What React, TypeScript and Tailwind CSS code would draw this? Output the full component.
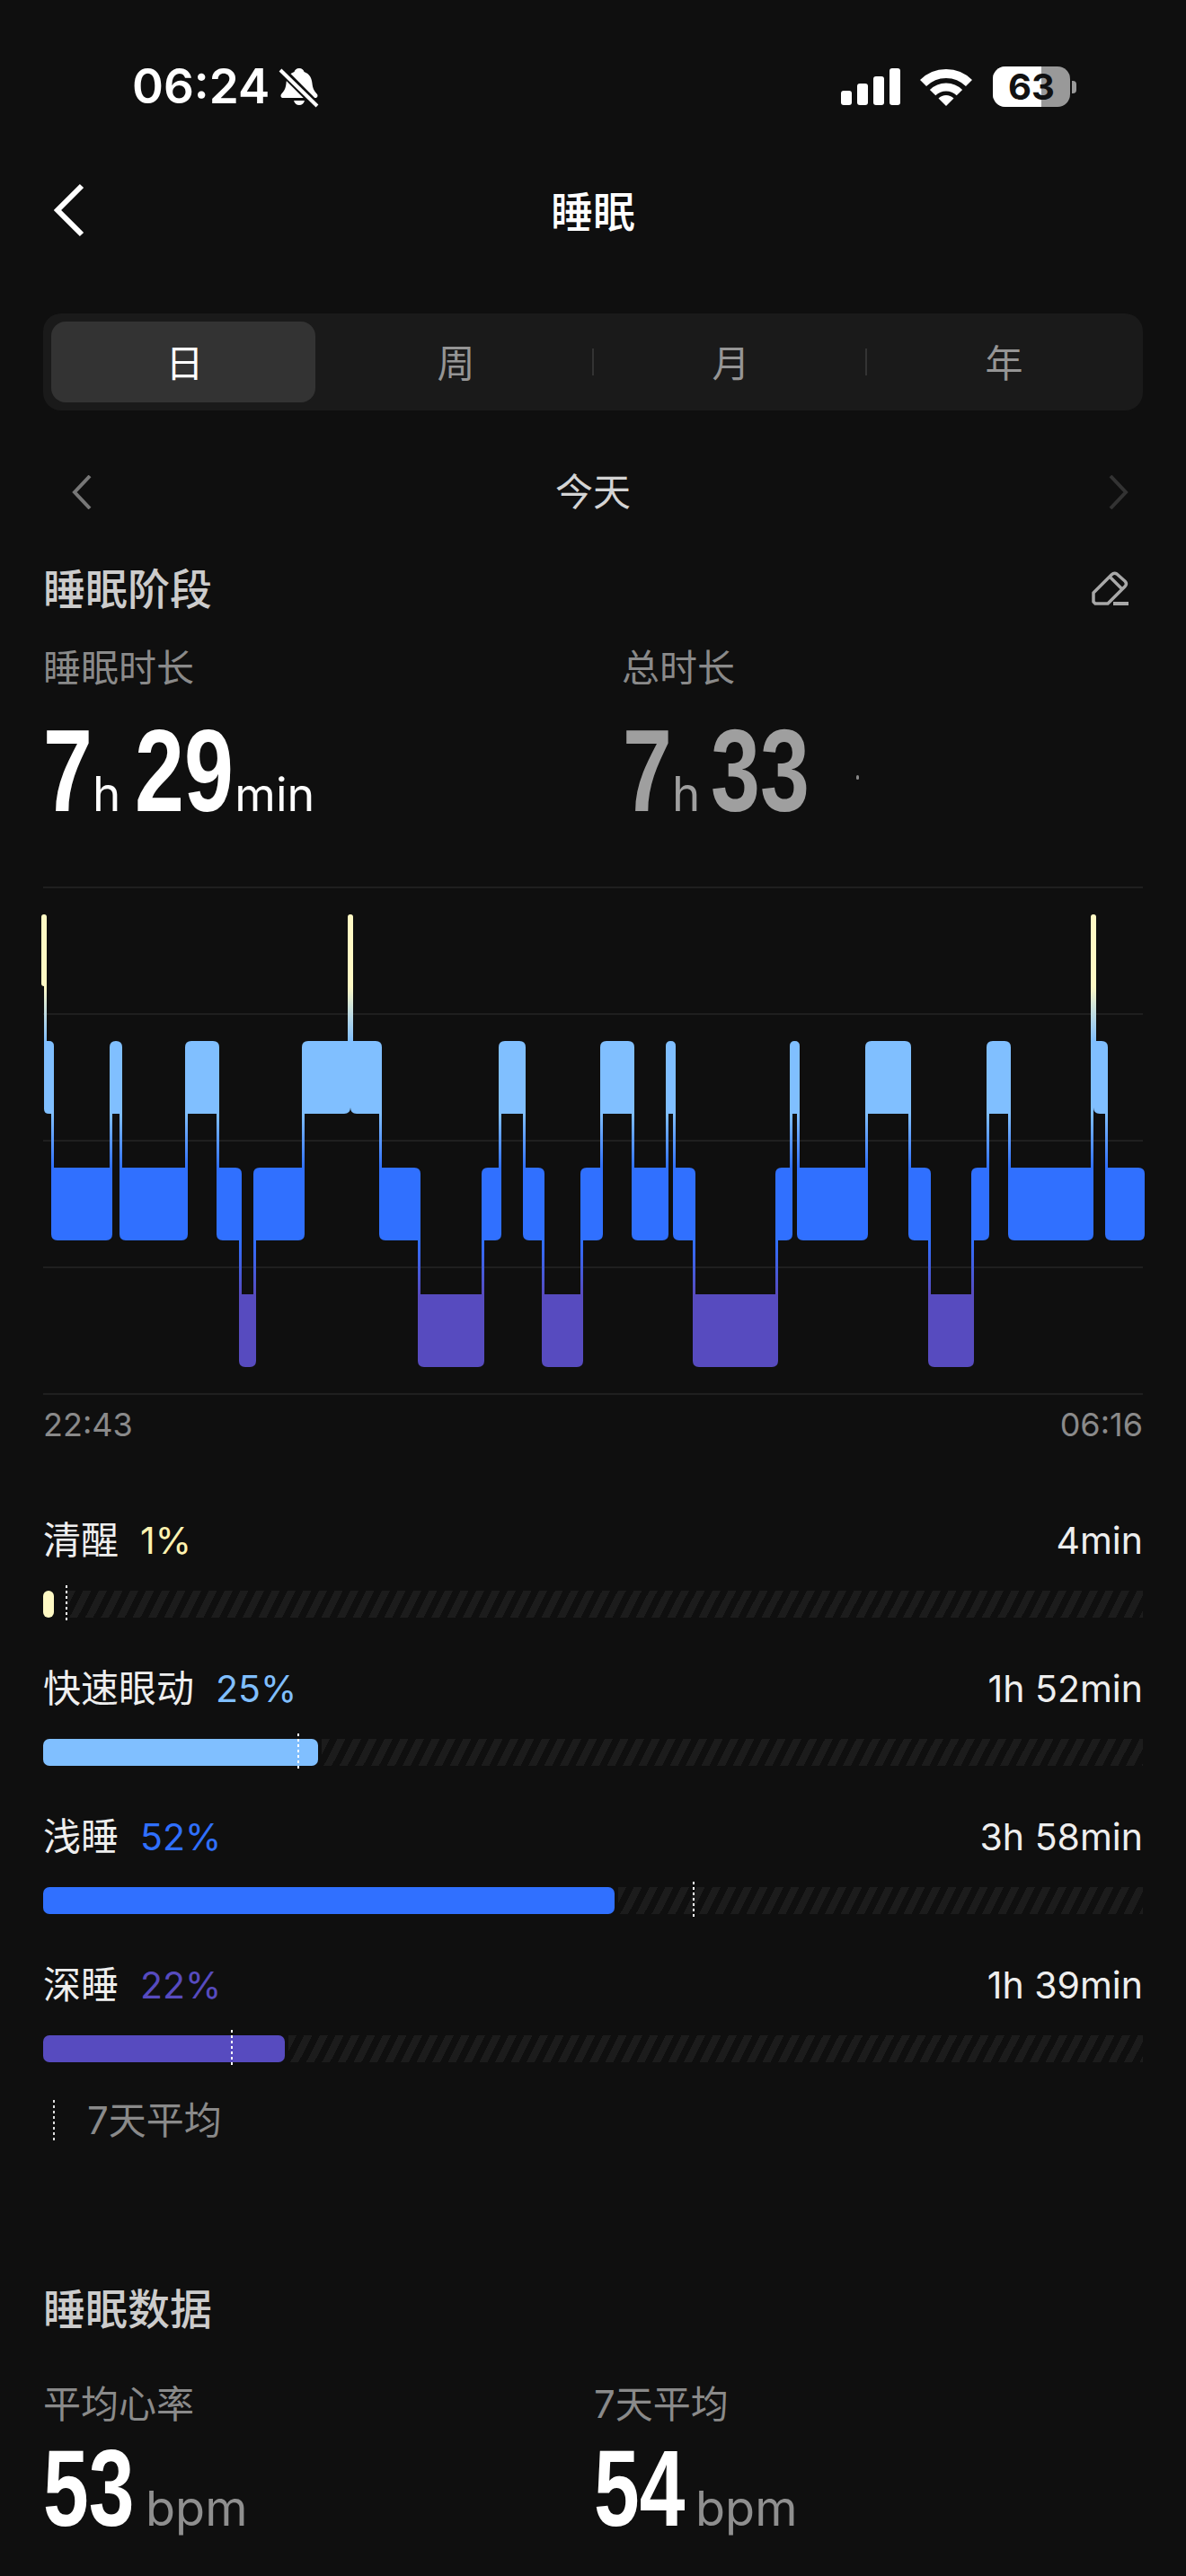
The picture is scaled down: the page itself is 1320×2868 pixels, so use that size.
type Level = "awake" | "rem" | "light" | "deep";
type Segment = [number, number, Level];

const levels: Record<Level, { top: number; bottom: number; rank: number }> = {
  awake: { top: 1018, bottom: 1098, rank: 0 },
  rem: { top: 1159, bottom: 1240, rank: 1 },
  light: { top: 1300, bottom: 1381, rank: 2 },
  deep: { top: 1441, bottom: 1522, rank: 3 },
};

const segments: Segment[] = [
  [46, 52, "awake"],
  [49, 60, "rem"],
  [57, 125, "light"],
  [122, 136, "rem"],
  [133, 209, "light"],
  [206, 244, "rem"],
  [241, 269, "light"],
  [266, 285, "deep"],
  [282, 339, "light"],
  [336, 390, "rem"],
  [387, 393, "awake"],
  [390, 425, "rem"],
  [422, 468, "light"],
  [465, 539, "deep"],
  [536, 558, "light"],
  [555, 585, "rem"],
  [582, 606, "light"],
  [603, 649, "deep"],
  [646, 671, "light"],
  [668, 706, "rem"],
  [703, 744, "light"],
  [741, 752, "rem"],
  [749, 774, "light"],
  [771, 866, "deep"],
  [863, 882, "light"],
  [879, 890, "rem"],
  [887, 966, "light"],
  [963, 1014, "rem"],
  [1011, 1036, "light"],
  [1033, 1084, "deep"],
  [1081, 1101, "light"],
  [1098, 1125, "rem"],
  [1122, 1217, "light"],
  [1214, 1220, "awake"],
  [1217, 1233, "rem"],
  [1230, 1274, "light"],
];

const gradientStops: [number, string][] = [
  [1098, "#fff9c4"],
  [1159, "#80bfff"],
  [1240, "#80bfff"],
  [1300, "#3070ff"],
  [1381, "#3070ff"],
  [1441, "#574bbf"],
];

function blockPath(index: number) {
  const [x1, x2, level] = segments[index];
  const { top, bottom, rank } = levels[level];
  const prev = index > 0 ? levels[segments[index - 1][2]].rank : null;
  const next = index < segments.length - 1 ? levels[segments[index + 1][2]].rank : null;
  const r = Math.min(7, (x2 - x1) / 2);
  const tl = prev !== null && prev < rank ? 0 : r;
  const bl = prev !== null && prev > rank ? 0 : r;
  const tr = next !== null && next < rank ? 0 : r;
  const br = next !== null && next > rank ? 0 : r;
  return [
    `M${x1 + tl} ${top}`,
    `L${x2 - tr} ${top}`,
    `Q${x2} ${top} ${x2} ${top + tr}`,
    `L${x2} ${bottom - br}`,
    `Q${x2} ${bottom} ${x2 - br} ${bottom}`,
    `L${x1 + bl} ${bottom}`,
    `Q${x1} ${bottom} ${x1} ${bottom - bl}`,
    `L${x1} ${top + tl}`,
    `Q${x1} ${top} ${x1 + tl} ${top}`,
    "Z",
  ].join(" ");
}

function SleepChart() {
  return (
    <svg viewBox="40 985 1240 570" className="block ml-10 mt-[62px] w-[1240px] h-[570px]">
      <defs>
        <linearGradient id="stage" gradientUnits="userSpaceOnUse" x1="0" y1="1018" x2="0" y2="1522">
          {gradientStops.map(([y, color]) => (
            <stop key={y} offset={(y - 1018) / 504} stopColor={color} />
          ))}
        </linearGradient>
      </defs>
      {[988, 1129, 1270, 1411, 1552].map((y) => (
        <rect key={y} x="48" y={y - 1} width="1224" height="2" fill="#1f1f1f" />
      ))}
      {segments.slice(0, -1).map((seg, i) => {
        const after = segments[i + 1];
        const a = levels[seg[2]];
        const b = levels[after[2]];
        const yTop = a.rank < b.rank ? a.bottom : b.bottom;
        const yBottom = a.rank < b.rank ? b.top : a.top;
        return (
          <rect
            key={i}
            x={after[0]}
            y={yTop - 1}
            width={seg[1] - after[0]}
            height={yBottom - yTop + 2}
            fill="url(#stage)"
          />
        );
      })}
      {segments.map((_, i) => (
        <path key={i} d={blockPath(i)} fill="url(#stage)" />
      ))}
    </svg>
  );
}

function StatusBar() {
  return (
    <div className="flex items-center justify-between h-[45px] mt-[74px] pl-[147px] pr-[122px]">
      <div className="flex items-center gap-[10px]">
        <span className="text-[53px] leading-none font-semibold text-white">06:24</span>
        <svg width="46" height="46" viewBox="0 0 46 46">
          <path
            d="M23 2c3 0 5 2 5.500 4 6 2 8.500 7 9 13 .5 6 3 9 5.500 12 1 1.500 .5 4-2 4H5c-2.500 0-3-2.500-2-4 2.500-3 5-6 5.500-12 .5-6 3-11 9-13C18 4 20 2 23 2z"
            fill="#fff"
          />
          <path d="M17 38h12c-1 3.500-3 5-6 5s-5-1.500-6-5z" fill="#fff" />
          <path d="M3 4l40 40" stroke="#0f0f0f" strokeWidth="9" />
          <path d="M2 4l41 40" stroke="#fff" strokeWidth="4" />
        </svg>
      </div>
      <div className="flex items-center">
        <div className="flex items-end gap-[6px] h-[41px]">
          <div className="w-3 h-4 rounded-[3px] bg-white" />
          <div className="w-3 h-6 rounded-[3px] bg-white" />
          <div className="w-3 h-8 rounded-[3px] bg-white" />
          <div className="w-3 h-[41px] rounded-[3px] bg-white" />
        </div>
        <svg width="58" height="42" viewBox="0 0 58 42" className="ml-[22px]">
          <path d="M3.500 16.500A36 36 0 0 1 54.500 16.500" fill="none" stroke="#fff" strokeWidth="10" />
          <path d="M14.100 27.100A21 21 0 0 1 43.900 27.100" fill="none" stroke="#fff" strokeWidth="9" />
          <path d="M29 42L20.500 33.500A12 12 0 0 1 37.500 33.500Z" fill="#fff" />
        </svg>
        <div className="relative ml-[23px] w-[86px] h-[45px] rounded-[14px] bg-[#999999]">
          <div className="w-[54px] h-full rounded-l-[14px] bg-white" />
          <span className="absolute inset-0 flex items-center justify-center text-[40px] font-bold leading-none text-[#111111]">
            63
          </span>
        </div>
        <div className="ml-[2px] w-[5px] h-[14px] rounded-r-[4px] bg-[#999999]" />
      </div>
    </div>
  );
}

function Chevron({ dir, color }: { dir: "left" | "right"; color: string }) {
  return (
    <svg width="22" height="38" viewBox="0 0 22 38" fill="none">
      <path d={dir === "left" ? "M20 1L3 19l17 18" : "M2 1l17 18L2 37"} stroke={color} strokeWidth="4" />
    </svg>
  );
}

function NavBar() {
  return (
    <div className="relative flex items-center justify-center h-[54px] mt-[88px] pt-[3px]">
      <svg width="36" height="60" viewBox="0 0 36 60" fill="none" className="absolute left-[58px] top-[-3px]">
        <path d="M33 3L6 30l27 27" stroke="#fff" strokeWidth="6" />
      </svg>
      <span className="text-[47px] leading-none font-medium text-white">睡眠</span>
    </div>
  );
}

function Tabs() {
  const tabs = ["日", "周", "月", "年"];
  return (
    <div className="mx-12 mt-[88px] h-[108px] rounded-[20px] bg-[#1a1a1a] p-[9px] grid grid-cols-[294px_308px_304px_304px]">
      {tabs.map((tab, i) => (
        <div
          key={tab}
          className={
            i === 0
              ? "flex items-center justify-center pt-[2px] pl-[3px] rounded-[16px] bg-[#333333] text-[42px] text-white"
              : "relative flex items-center justify-center pt-[2px] pl-[5px] text-[42px] text-[#959595]"
          }
        >
          {i > 1 && <div className="absolute left-0 top-[30px] w-[2px] h-[30px] bg-[#333333]" />}
          {tab}
        </div>
      ))}
    </div>
  );
}

const stages = [
  { name: "清醒", pct: "1%", color: "text-[#fff3b0]", bar: "bg-[#fff9c4]", value: "4min", width: 12, gap: 15, marker: 25 },
  { name: "快速眼动", pct: "25%", color: "text-[#80bfff]", bar: "bg-[#80bfff]", value: "1h 52min", width: 306, gap: 4, marker: 283 },
  { name: "浅睡", pct: "52%", color: "text-[#3070ff]", bar: "bg-[#3070ff]", value: "3h 58min", width: 636, gap: 4, marker: 723 },
  { name: "深睡", pct: "22%", color: "text-[#574bbf]", bar: "bg-[#574bbf]", value: "1h 39min", width: 269, gap: 4, marker: 209 },
];

function StageRow({ stage, first }: { stage: (typeof stages)[number]; first: boolean }) {
  return (
    <div className={first ? "mt-[85px]" : "mt-[57px]"}>
      <div className="flex items-center justify-between h-[44px] text-[42px] leading-none">
        <div className="flex items-center gap-6">
          <span className="text-[#eeeeee]">{stage.name}</span>
          <span className={`text-[41px] ${stage.color}`}>{stage.pct}</span>
        </div>
        <span className="text-[41px] text-[#eeeeee]">{stage.value}</span>
      </div>
      <div className="relative flex h-[30px] mt-[34px]">
        <div className={`${stage.bar} h-full rounded-[7px] shrink-0`} style={{ width: stage.width }} />
        <div
          className="flex-1 h-full bg-[repeating-linear-gradient(117deg,#1c1c1c_0px,#1c1c1c_8px,transparent_8px,transparent_15.6px)]"
          style={{ marginLeft: stage.gap }}
        />
        <div
          className="absolute top-[-6px] w-[2px] h-[41px] bg-[repeating-linear-gradient(to_bottom,#ffffff_0px,#ffffff_3px,transparent_3px,transparent_6px)]"
          style={{ left: stage.marker }}
        />
      </div>
    </div>
  );
}

// condensed digits: no narrow bold face is installed, so squeeze Liberation Sans
function BigNumber({ value, width, size }: { value: string; width: string; size: string }) {
  return (
    <span className={`inline-block ${width} shrink-0 whitespace-nowrap`}>
      <span
        className={`inline-block ${size} leading-none font-bold origin-left scale-x-[0.76] [font-family:'Liberation_Sans',sans-serif]`}
      >
        {value}
      </span>
    </span>
  );
}

export default function App() {
  return (
    <div className="w-[1320px] h-[2868px] overflow-hidden bg-[#0f0f0f] [font-family:Inter,'Noto_Sans_CJK_SC',sans-serif]">
      <div className="pt-px -mt-px">
        <StatusBar />
        <NavBar />
        <Tabs />

        <div className="grid grid-cols-[1fr_auto_1fr] items-center h-[40px] mt-[70px] px-16">
          <div className="ml-4 flex">
            <Chevron dir="left" color="#777777" />
          </div>
          <span className="text-[42px] leading-none text-[#d4d4d4]">今天</span>
          <div className="flex justify-end">
            <Chevron dir="right" color="#333333" />
          </div>
        </div>

        <div className="flex items-center justify-between h-[44px] mt-[66px] pl-12 pr-[63px]">
          <span className="text-[47px] leading-none font-medium text-[#cccccc]">睡眠阶段</span>
          <svg width="42" height="40" viewBox="0 0 42 40" fill="none">
            <path
              d="M2 35V25L22 5q3-3 6-1l9 8q3 3 0 6L18 37H4z M20 7l13 13"
              stroke="#a8a8a8"
              strokeWidth="3.500"
              strokeLinejoin="round"
            />
            <rect x="24" y="35" width="17" height="4" fill="#a8a8a8" />
          </svg>
        </div>

        <div className="flex h-[44px] mt-[45px] pl-12 text-[42px] leading-[44px] text-[#8a8a8a]">
          <div className="w-[644px]">睡眠时长</div>
          <div>总时长</div>
        </div>

        <div className="relative flex h-[130px] mt-[27px] pl-12">
          <div className="flex items-baseline w-[645px] text-white">
            <BigNumber value="7" width="w-[55px]" size="text-[130px]" />
            <span className="text-[53px] leading-none">h</span>
            <span className="ml-4">
              <BigNumber value="29" width="w-[110px]" size="text-[130px]" />
            </span>
            <span className="text-[52px] leading-none ml-px">min</span>
          </div>
          <div className="flex items-baseline text-[#9f9f9f]">
            <BigNumber value="7" width="w-[55px]" size="text-[130px]" />
            <span className="text-[53px] leading-none">h</span>
            <span className="ml-[12px]">
              <BigNumber value="33" width="w-[110px]" size="text-[130px]" />
            </span>
          </div>
          <div className="absolute left-[953px] top-[70px] w-[3px] h-[5px] rounded-full bg-[#888888]" />
        </div>

        <SleepChart />

        <div className="flex items-center justify-between h-[44px] mt-[9px] px-12 text-[36px] leading-none text-[#8a8a8a]">
          <span>22:43</span>
          <span>06:16</span>
        </div>

        <div className="px-12">
          {stages.map((stage, i) => (
            <StageRow key={stage.name} stage={stage} first={i === 0} />
          ))}

          <div className="flex items-center h-[46px] mt-[42px] pl-[11px]">
            <div className="w-[2px] h-full bg-[repeating-linear-gradient(to_bottom,#dddddd_0px,#dddddd_3px,transparent_3px,transparent_6px)]" />
            <span className="ml-[36px] text-[42px] leading-none text-[#8a8a8a]">7天平均</span>
          </div>

          <div className="mt-[165px] h-[44px] text-[47px] leading-[44px] font-medium text-[#cccccc]">睡眠数据</div>

          <div className="flex h-[44px] mt-[62px] text-[42px] leading-[44px] text-[#8a8a8a]">
            <div className="w-[613px]">平均心率</div>
            <div>7天平均</div>
          </div>

          <div className="flex h-[120px] mt-[11px]">
            <div className="flex items-baseline w-[613px] text-white">
              <BigNumber value="53" width="w-[101px]" size="text-[120px]" />
              <span className="ml-[13px] text-[54px] leading-none text-[#8f8f8f]">bpm</span>
            </div>
            <div className="flex items-baseline text-white">
              <BigNumber value="54" width="w-[101px]" size="text-[120px]" />
              <span className="ml-3 text-[54px] leading-none text-[#8f8f8f]">bpm</span>
            </div>
          </div>
        </div>
      </div>
    </div>
  );
}
